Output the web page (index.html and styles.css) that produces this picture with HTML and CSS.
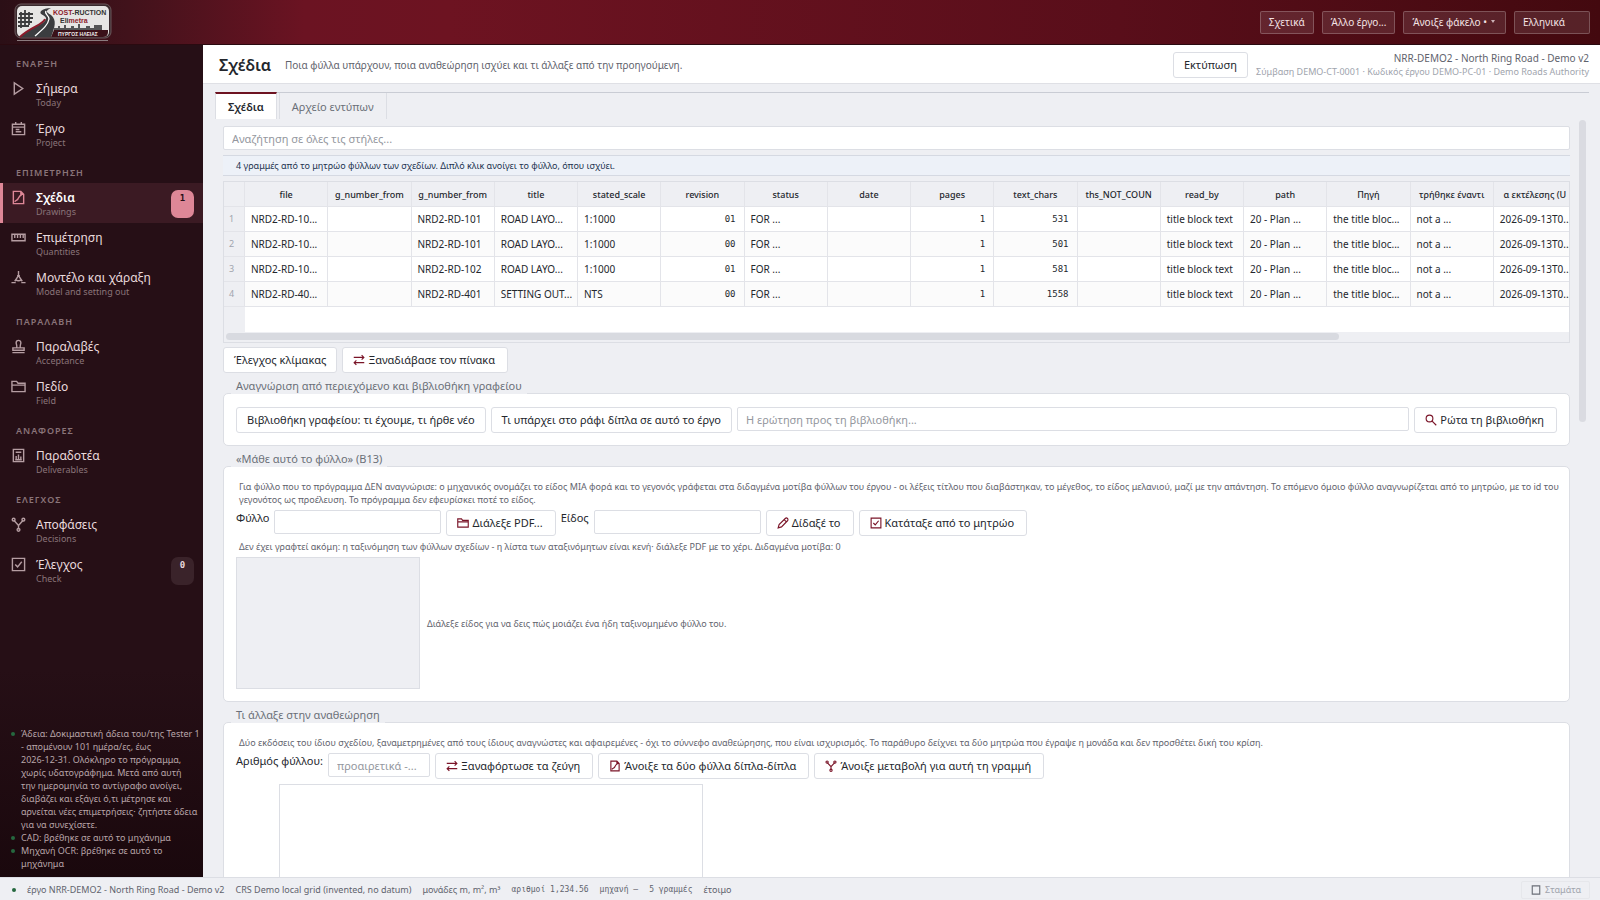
FILE: index.html
```html
<!DOCTYPE html>
<html lang="el">
<head>
<meta charset="utf-8">
<title>Σχέδια</title>
<link rel="stylesheet" href="styles.css">
</head>
<body>
<svg class="defs" aria-hidden="true">
  <symbol id="i-play" viewBox="0 0 16 16"><path d="M3.5 2v12l9-6z"/></symbol>
  <symbol id="i-cal" viewBox="0 0 16 16"><path d="M1.500 3.500h13v11h-13zM1.500 6.500h13M5 1v2.500M11 1v2.500M5 9h4M5 11.500h6"/></symbol>
  <symbol id="i-sheet" viewBox="0 0 16 16"><path d="M2.500 1.500h8l3 3v10h-11zM10.500 1.500v3h3M4 12.500c1-2 2.500-1 3.500-3S9 5.500 11.500 5"/></symbol>
  <symbol id="i-rule" viewBox="0 0 16 16"><path d="M1 4.500h14v7H1zM4 5v3.500M7 5v3.500M10 5v3.500M13 5v3.500"/></symbol>
  <symbol id="i-model" viewBox="0 0 16 16"><path d="M.5 13.500h4.500M11 13.500h4.500M8 1v5M8 6l-4 6M8 6l4 6M5 10.500c2 1.300 4 1.300 6 0M6.500 6h3"/></symbol>
  <symbol id="i-stamp" viewBox="0 0 16 16"><path d="M1.500 14.500h13M2 12v-2.500h12V12zM6 9.500c.8-3-.5-3.500-.5-5.500a2.500 2.500 0 0 1 5 0c0 2-1.300 2.500-.5 5.500"/></symbol>
  <symbol id="i-folder" viewBox="0 0 16 16"><path d="M1 13.500v-11h5l1.500 2H15v9zM1 6.500h14"/></symbol>
  <symbol id="i-report" viewBox="0 0 16 16"><path d="M2.500 1.500h11v13h-11zM5 4.500h6M5.500 12V8.500M8 12V7M10.500 12V9M4.500 12.500h7"/></symbol>
  <symbol id="i-fork" viewBox="0 0 16 16"><path d="M3 3.500l5 5.500 5-5.500M8 9v4"/><circle cx="2.800" cy="2.800" r="1.500"/><circle cx="13.200" cy="2.800" r="1.500"/><circle cx="8" cy="13.700" r="1.500"/></symbol>
  <symbol id="i-check" viewBox="0 0 16 16"><path d="M1.500 1.500h13v13h-13zM4.500 8l2.500 2.500L11.500 5"/></symbol>
  <symbol id="i-swap" viewBox="0 0 16 16"><path d="M1 4.500h13.500M11.500 1.500l3 3-3 3M15 11.500H1.500M4.500 8.500l-3 3 3 3"/></symbol>
  <symbol id="i-search" viewBox="0 0 16 16"><circle cx="6" cy="6" r="4.500"/><path d="M9.500 9.500l5.500 5.500"/></symbol>
  <symbol id="i-pen" viewBox="0 0 16 16"><path d="M1.500 14.500l1.300-4.500L11 2a2.100 2.100 0 0 1 3 3L6 13.200zM9.500 3.500l3 3"/></symbol>
  <symbol id="i-stop" viewBox="0 0 16 16"><path d="M3 2.500h10v11H3z"/></symbol>
</svg>

<header class="topbar">
  <svg class="logo" width="98" height="38" viewBox="0 0 98 38" role="img" aria-label="KOST-RUCTION Elimetra">
    <rect x="1" y="1" width="96" height="34" rx="6" fill="#3a2a2e" stroke="#6a575b"/>
    <rect x="3" y="3" width="92" height="31" rx="5" fill="#e6e5e4"/>
    <path d="M5 11h14M4 15h15M4 19h14M4 23h11M7 9v16M11 7v17M15 9v13" stroke="#3c3c3e" stroke-width="1.800" fill="none"/>
    <path d="M6 34C16 24 30 22 32 16 33 12 24 12 27 8c2-2 6-3 10-3-6 3-5 4 0 7 6 5 4 12 0 22z" fill="#3b3d40"/>
    <path d="M6 34C16 24 29 22 31 16" stroke="#8d1b2b" stroke-width="2" fill="none"/>
    <path d="M21 33c8-7 13-11 14-17 0-4-5-5-3-8" stroke="#fff" stroke-width="1.300" fill="none"/>
    <path d="M40 28v-3h4v-2h2v2h4v-3h2v3h5v-2h3v2h4v-4h2v4h6v-2h4v2h4v-3h8v7H40z" fill="#555557"/>
    <path d="M40 27h54v2q0 5-5 5H37z" fill="#3a1119"/>
    <text x="39" y="12" class="logo-name"><tspan fill="#8d1b2b">KOST</tspan>-RUCTION</text>
    <text x="46" y="20" class="logo-name">Eli<tspan fill="#8d1b2b">metra</tspan></text>
    <text x="44" y="33" class="logo-city">ΠΥΡΓΟΣ ΗΛΕΙΑΣ</text>
    <path d="M3 37.500h91" stroke="#8b7b7e"/>
  </svg>
  <div class="top-actions">
    <button class="top-btn">Σχετικά</button>
    <button class="top-btn">Άλλο έργο...</button>
    <button class="top-btn">Άνοιξε φάκελο •<i class="caret"></i></button>
    <select class="top-btn lang" aria-label="Γλώσσα"><option>Ελληνικά</option></select>
  </div>
</header>

<div class="shell">
  <aside class="sidebar">
    <nav>
      <h2 class="nav-head">ΕΝΑΡΞΗ</h2>
      <a class="nav-item" href="#"><svg class="ico"><use href="#i-play"/></svg><span class="nav-text">Σήμερα<small>Today</small></span></a>
      <a class="nav-item" href="#"><svg class="ico"><use href="#i-cal"/></svg><span class="nav-text">Έργο<small>Project</small></span></a>
      <h2 class="nav-head">ΕΠΙΜΕΤΡΗΣΗ</h2>
      <a class="nav-item active" href="#"><svg class="ico"><use href="#i-sheet"/></svg><span class="nav-text">Σχέδια<small>Drawings</small></span><b class="badge">1</b></a>
      <a class="nav-item" href="#"><svg class="ico"><use href="#i-rule"/></svg><span class="nav-text">Επιμέτρηση<small>Quantities</small></span></a>
      <a class="nav-item" href="#"><svg class="ico"><use href="#i-model"/></svg><span class="nav-text">Μοντέλο και χάραξη<small>Model and setting out</small></span></a>
      <h2 class="nav-head">ΠΑΡΑΛΑΒΗ</h2>
      <a class="nav-item" href="#"><svg class="ico"><use href="#i-stamp"/></svg><span class="nav-text">Παραλαβές<small>Acceptance</small></span></a>
      <a class="nav-item" href="#"><svg class="ico"><use href="#i-folder"/></svg><span class="nav-text">Πεδίο<small>Field</small></span></a>
      <h2 class="nav-head">ΑΝΑΦΟΡΕΣ</h2>
      <a class="nav-item" href="#"><svg class="ico"><use href="#i-report"/></svg><span class="nav-text">Παραδοτέα<small>Deliverables</small></span></a>
      <h2 class="nav-head">ΕΛΕΓΧΟΣ</h2>
      <a class="nav-item" href="#"><svg class="ico"><use href="#i-fork"/></svg><span class="nav-text">Αποφάσεις<small>Decisions</small></span></a>
      <a class="nav-item" href="#"><svg class="ico"><use href="#i-check"/></svg><span class="nav-text">Έλεγχος<small>Check</small></span><b class="badge">0</b></a>
    </nav>
    <ul class="health">
      <li>Άδεια: Δοκιμαστική άδεια του/της Tester 1 - απομένουν 101 ημέρα/ες, έως<br>2026-12-31. Ολόκληρο το πρόγραμμα, χωρίς υδατογράφημα. Μετά από αυτή<br>την ημερομηνία το αντίγραφο ανοίγει, διαβάζει και εξάγει ό,τι μέτρησε και αρνείται νέες επιμετρήσεις· ζητήστε άδεια για να συνεχίσετε.</li>
      <li>CAD: βρέθηκε σε αυτό το μηχάνημα</li>
      <li>Μηχανή OCR: βρέθηκε σε αυτό το<br>μηχάνημα</li>
    </ul>
  </aside>

  <main class="main">
    <div class="page-head">
      <h1>Σχέδια</h1>
      <p class="lead">Ποια φύλλα υπάρχουν, ποια αναθεώρηση ισχύει και τι άλλαξε από την προηγούμενη.</p>
      <button class="btn">Εκτύπωση</button>
      <div class="project">NRR-DEMO2 - North Ring Road - Demo v2<small>Σύμβαση DEMO-CT-0001 · Κωδικός έργου DEMO-PC-01 · Demo Roads Authority</small></div>
    </div>
    <div class="tabs">
      <button class="tab on">Σχέδια</button>
      <button class="tab">Αρχείο εντύπων</button>
    </div>
    <div class="scroll">
      <div class="content">
        <input class="field search" type="text" aria-label="Αναζήτηση" placeholder="Αναζήτηση σε όλες τις στήλες...">
        <p class="notice">4 γραμμές από το μητρώο φύλλων των σχεδίων. Διπλό κλικ ανοίγει το φύλλο, όπου ισχύει.</p>
        <div class="grid">
          <table>
            <colgroup><col class="c-num"><col span="16"></colgroup>
            <thead><tr><th></th><th>file</th><th>g_number_from</th><th>g_number_from</th><th>title</th><th>stated_scale</th><th>revision</th><th>status</th><th>date</th><th>pages</th><th>text_chars</th><th>ths_NOT_COUN</th><th>read_by</th><th>path</th><th>Πηγή</th><th>τρήθηκε έναντι</th><th>α εκτέλεσης (U</th></tr></thead>
            <tbody>
              <tr><th>1</th><td>NRD2-RD-10...</td><td></td><td>NRD2-RD-101</td><td>ROAD LAYO...</td><td>1:1000</td><td class="n">01</td><td>FOR ...</td><td></td><td class="n">1</td><td class="n">531</td><td></td><td>title block text</td><td>20 - Plan ...</td><td>the title bloc...</td><td>not a ...</td><td>2026-09-13T0...</td></tr>
              <tr><th>2</th><td>NRD2-RD-10...</td><td></td><td>NRD2-RD-101</td><td>ROAD LAYO...</td><td>1:1000</td><td class="n">00</td><td>FOR ...</td><td></td><td class="n">1</td><td class="n">501</td><td></td><td>title block text</td><td>20 - Plan ...</td><td>the title bloc...</td><td>not a ...</td><td>2026-09-13T0...</td></tr>
              <tr><th>3</th><td>NRD2-RD-10...</td><td></td><td>NRD2-RD-102</td><td>ROAD LAYO...</td><td>1:1000</td><td class="n">01</td><td>FOR ...</td><td></td><td class="n">1</td><td class="n">581</td><td></td><td>title block text</td><td>20 - Plan ...</td><td>the title bloc...</td><td>not a ...</td><td>2026-09-13T0...</td></tr>
              <tr><th>4</th><td>NRD2-RD-40...</td><td></td><td>NRD2-RD-401</td><td>SETTING OUT...</td><td>NTS</td><td class="n">00</td><td>FOR ...</td><td></td><td class="n">1</td><td class="n">1558</td><td></td><td>title block text</td><td>20 - Plan ...</td><td>the title bloc...</td><td>not a ...</td><td>2026-09-13T0...</td></tr>
            </tbody>
          </table>
          <div class="grid-rest"></div>
          <div class="hbar"><i></i></div>
        </div>
        <div class="row">
          <button class="btn">Έλεγχος κλίμακας</button>
          <button class="btn has-ico"><svg class="ico"><use href="#i-swap"/></svg>Ξαναδιάβασε τον πίνακα</button>
        </div>

        <h3 class="group-title">Αναγνώριση από περιεχόμενο και βιβλιοθήκη γραφείου</h3>
        <section class="group">
          <div class="row">
            <button class="btn">Βιβλιοθήκη γραφείου: τι έχουμε, τι ήρθε νέο</button>
            <button class="btn">Τι υπάρχει στο ράφι δίπλα σε αυτό το έργο</button>
            <input class="field grow" type="text" aria-label="Ερώτηση" placeholder="Η ερώτηση προς τη βιβλιοθήκη...">
            <button class="btn has-ico"><svg class="ico"><use href="#i-search"/></svg>Ρώτα τη βιβλιοθήκη</button>
          </div>
        </section>

        <h3 class="group-title">«Μάθε αυτό το φύλλο» (B13)</h3>
        <section class="group">
          <p class="hint">Για φύλλο που το πρόγραμμα ΔΕΝ αναγνώρισε: ο μηχανικός ονομάζει το είδος ΜΙΑ φορά και το γεγονός γράφεται στα διδαγμένα μοτίβα φύλλων του έργου - οι λέξεις τίτλου που διαβάστηκαν, το μέγεθος, το είδος μελανιού, μαζί με την απάντηση. Το επόμενο όμοιο φύλλο αναγνωρίζεται από το μητρώο, με το id του γεγονότος ως προέλευση. Το πρόγραμμα δεν εφευρίσκει ποτέ το είδος.</p>
          <div class="row">
            <label for="sheet">Φύλλο</label><input class="field mid" id="sheet" type="text">
            <button class="btn has-ico"><svg class="ico"><use href="#i-folder"/></svg>Διάλεξε PDF...</button>
            <label for="kind">Είδος</label><input class="field mid" id="kind" type="text">
            <button class="btn has-ico"><svg class="ico"><use href="#i-pen"/></svg>Δίδαξέ το</button>
            <button class="btn has-ico"><svg class="ico"><use href="#i-check"/></svg>Κατάταξε από το μητρώο</button>
          </div>
          <p class="hint after">Δεν έχει γραφτεί ακόμη: η ταξινόμηση των φύλλων σχεδίων - η λίστα των αταξινόμητων είναι κενή· διάλεξε PDF με το χέρι. Διδαγμένα μοτίβα: 0</p>
          <div class="preview-row"><div class="preview"></div><p class="hint">Διάλεξε είδος για να δεις πώς μοιάζει ένα ήδη ταξινομημένο φύλλο του.</p></div>
        </section>

        <h3 class="group-title">Τι άλλαξε στην αναθεώρηση</h3>
        <section class="group">
          <p class="hint">Δύο εκδόσεις του ίδιου σχεδίου, ξαναμετρημένες από τους ίδιους αναγνώστες και αφαιρεμένες - όχι το σύννεφο αναθεώρησης, που είναι ισχυρισμός. Το παράθυρο δείχνει τα δύο μητρώα που έγραψε η μονάδα και δεν προσθέτει δική του κρίση.</p>
          <div class="row">
            <label for="num">Αριθμός φύλλου:</label><input class="field short" id="num" type="text" placeholder="προαιρετικά -...">
            <button class="btn has-ico"><svg class="ico"><use href="#i-swap"/></svg>Ξαναφόρτωσε τα ζεύγη</button>
            <button class="btn has-ico"><svg class="ico"><use href="#i-sheet"/></svg>Άνοιξε τα δύο φύλλα δίπλα-δίπλα</button>
            <button class="btn has-ico"><svg class="ico"><use href="#i-fork"/></svg>Άνοιξε μεταβολή για αυτή τη γραμμή</button>
          </div>
          <div class="list"></div>
        </section>
      </div>
      <div class="vbar"><i></i></div>
    </div>
  </main>
</div>

<footer class="status">
  <i class="dot"></i>
  <span>έργο NRR-DEMO2 - North Ring Road - Demo v2</span>
  <span>CRS Demo local grid (invented, no datum)</span>
  <span>μονάδες m, m², m³</span>
  <span class="mono">αριθμοί 1,234.56</span>
  <span class="mono">μηχανή —</span>
  <span class="mono">5 γραμμές</span>
  <span>έτοιμο</span>
  <button class="stop" disabled><svg class="ico"><use href="#i-stop"/></svg>Σταμάτα</button>
</footer>
</body>
</html>
```
FILE: styles.css
```css
* { box-sizing: border-box; }
body {
  margin: 0; height: 100vh; display: flex; flex-direction: column; overflow: hidden;
  font: 11px/16px "Noto Sans", sans-serif; color: #24272d; background: #eeeff3;
}
h1, h2, h3, p, ul { margin: 0; padding: 0; font-weight: 400; }
button, input, select { font: inherit; color: inherit; margin: 0; }
small { display: block; }
.defs { position: absolute; width: 0; height: 0; }
.ico { flex: none; width: 14px; height: 14px; fill: none; stroke: currentColor; stroke-width: 1.5; }

.topbar {
  flex: none; height: 45px; display: flex; align-items: center; justify-content: space-between;
  padding: 0 10px 0 14px; border-bottom: 1px solid #2a0a10;
  background: linear-gradient(90deg, #2b0f16 0, #41121b 8%, #6b1322 19%, #6d1321 28%, #590e1a 70%, #43090f 100%);
}
.logo-name { font: 700 7px "Liberation Sans", sans-serif; fill: #333; }
.logo-city { font: 700 5px "Liberation Sans", sans-serif; fill: #eee; }
.top-actions { display: flex; gap: 8px; }
.top-btn {
  height: 23px; padding: 0 8px; font-size: 10px; line-height: 14px; color: #f4e3e5;
  background: rgba(255,255,255,.1); border: 1px solid rgba(255,255,255,.22); border-radius: 2px;
}
.lang { width: 76px; appearance: none; }
.caret { display: inline-block; margin: 0 2px 3px 4px; border: 2px solid transparent; border-top: 3px solid #cdb2b6; border-bottom: 0; }

.shell { flex: 1; min-height: 0; display: flex; }
.sidebar {
  flex: none; width: 203px; display: flex; flex-direction: column; justify-content: space-between;
  background: linear-gradient(#260f16 0, #260f16 75%, #1a080d 100%);
}
.nav-head { height: 29px; padding: 11px 0 0 16px; font-size: 9px; line-height: 16px; font-weight: 600; letter-spacing: 1px; color: #8a7479; }
.nav-item {
  height: 40px; display: flex; padding: 7px 9px 0 8px; gap: 10px; color: #e9dadd; text-decoration: none;
  border-left: 3px solid transparent;
}
.nav-item .ico { width: 15px; height: 15px; color: #b59da2; }
.nav-text { flex: 1; font-size: 12px; line-height: 15px; }
.nav-text small { font-size: 9px; line-height: 13px; font-weight: 400; color: #8a7479; }
.nav-item.active { background: #3b1a23; border-left-color: #de8797; font-weight: 600; color: #fff; }
.nav-item.active .ico { color: #de8797; }
.badge {
  width: 23px; height: 28px; padding-top: 1px; border-radius: 7px; text-align: center;
  font: 700 9px/14px "DejaVu Sans Mono", monospace; background: #3a232a; color: #e9dadd;
}
.active .badge { background: #de8797; color: #260f16; }
.health { list-style: none; padding: 0 3px 7px 21px; font-size: 9px; color: #b9a5a9; }
.health li { position: relative; line-height: 13px; }
.health li::before { content: ""; position: absolute; left: -10px; top: 5px; width: 4px; height: 4px; border-radius: 50%; background: #25683f; }

.main { flex: 1; min-width: 0; display: flex; flex-direction: column; }
.page-head {
  flex: none; height: 39px; display: flex; align-items: center; padding: 2px 11px 0 16px;
  background: #fff; border-bottom: 1px solid #dfe0e5;
}
.page-head h1 { font-size: 16px; line-height: 22px; font-weight: 600; }
.lead { flex: 1; margin-left: 14px; font-size: 10px; color: #5f636d; }
.project { margin-left: 8px; text-align: right; font-size: 10px; line-height: 13px; color: #5f636d; }
.project small { font-size: 9px; line-height: 13px; color: #a0a4ad; }

.tabs { flex: none; display: flex; gap: 2px; margin: 8px 11px 0 12px; border-top: 1px solid #c9ccd4; }
.tab { height: 26px; padding: 1px 12px 0; font-size: 11px; border: 1px solid #dcdee4; border-width: 0 1px; background: #eeeff3; color: #6b6f78; }
.tab.on { margin-top: -1px; height: 27px; background: #fff; border-top: 2px solid #6d1321; color: #24272d; font-weight: 600; }

.scroll { flex: 1; min-height: 0; display: flex; overflow: hidden; }
.content { flex: 1; min-width: 0; padding: 7px 9px 0 20px; }
.vbar { flex: none; width: 21px; padding-top: 1px; }
.vbar i { display: block; width: 7px; height: 302px; border-radius: 4px; background: #dadbe1; }

.field {
  height: 24px; padding: 0 8px; min-width: 0; background: #fff;
  border: 1px solid #dcdee4; border-radius: 2px; outline: 0;
}
.field::placeholder { color: #94979e; opacity: 1; }
.search { display: block; width: 100%; }
.grow { flex: 1; }
.mid { width: 167px; }
.short { width: 102px; }
.btn {
  flex: none; height: 26px; padding: 0 10px; background: #fff; border: 1px solid #dcdee4; border-radius: 3px;
}
.has-ico { display: flex; align-items: center; gap: 3px; padding: 0 12px 0 10px; }
.has-ico .ico { width: 12px; height: 12px; color: #7a1428; }
.row { display: flex; align-items: flex-start; gap: 5px; }

.notice {
  margin: 5px 0; padding: 2px 13px; font-size: 9px; line-height: 15px; color: #22314f;
  background: #edf1f8; border: 1px solid #d5d9e2; border-width: 1px 0;
}

.grid { margin-bottom: 4px; border: 1px solid #dcdee4; overflow: hidden; background: #eeeff3; }
table { width: calc(100% + 8px); table-layout: fixed; border-collapse: separate; border-spacing: 0; background: #fff; font-size: 10px; line-height: 14px; }
.c-num { width: 21px; }
th, td { height: 25px; padding: 0 0 0 6px; border: 1px solid #e3e4e9; border-width: 0 1px 1px 0; white-space: nowrap; overflow: hidden; text-align: left; }
thead th { padding: 2px 4px 0; background: #eeeff3; text-align: center; font-weight: 500; font-size: 9px; }
tbody th { padding: 0 5px; background: #eeeff3; font-weight: 400; font-size: 9px; color: #a0a4ad; }
tbody tr:nth-child(even) td { background: #fbfbfb; }
td.n { padding-right: 8px; text-align: right; font-family: "DejaVu Sans Mono", monospace; font-size: 9px; }
.grid-rest { height: 25px; margin-left: 21px; background: #fff; }
.hbar { padding: 1px 2px 2px; height: 10px; }
.hbar i { display: block; width: 83%; height: 7px; border-radius: 4px; background: #d8dae0; }

.group-title {
  position: relative; width: max-content; margin: 4px 0 -1px 8px; padding: 0 5px;
  font-size: 11px; line-height: 17px; color: #6b6f78; background: #eeeff3;
}
.group { padding: 13px 12px 12px; background: #fff; border: 1px solid #dcdee4; border-radius: 5px; }
.hint { padding: 0 0 0 3px; margin-right: -6px; font-size: 9px; line-height: 13px; color: #5f636d; }
.hint + .row { margin-top: 4px; }
.hint.after { margin: 4px 0; }
.preview-row { display: flex; align-items: center; gap: 4px; }
.preview { width: 184px; height: 132px; background: #eeeff3; border: 1px solid #dcdee4; }
.list { width: 424px; height: 160px; margin: 5px 0 0 43px; border: 1px solid #dcdee4; }

.status {
  flex: none; height: 23px; display: flex; align-items: center; gap: 11px; padding: 2px 10px 0 12px;
  border-top: 1px solid #dcdee4; font-size: 9px; color: #5f636d;
}
.dot { width: 4px; height: 4px; border-radius: 50%; background: #25683f; }
.mono { font-family: "DejaVu Sans Mono", monospace; font-size: 8px; }
.stop {
  margin-left: auto; height: 18px; display: flex; align-items: center; gap: 3px; padding: 0 8px;
  background: none; border: 1px solid #e6e7eb; border-radius: 2px; color: #a0a4ad;
}
.stop .ico { width: 12px; height: 12px; color: #6b6f78; }
```
